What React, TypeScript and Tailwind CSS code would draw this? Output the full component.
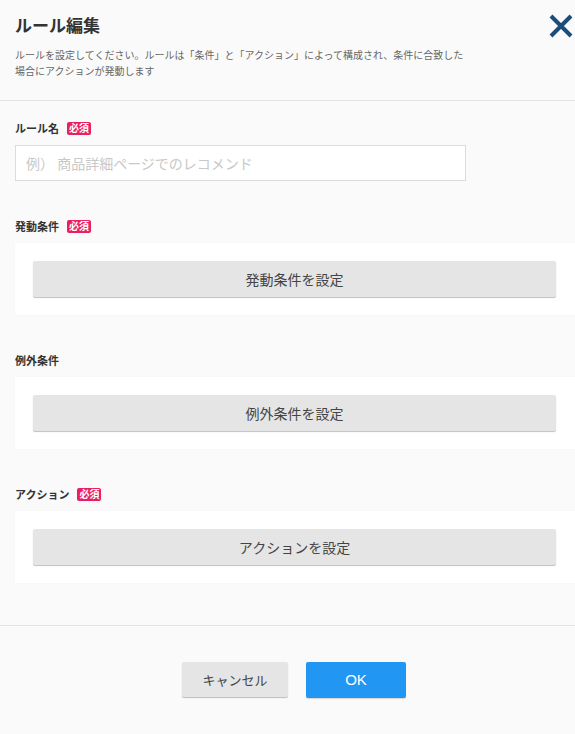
import React from "react";

const jp = { fontFamily: '"Noto Sans CJK JP", "Noto Sans", sans-serif' };

function Badge() {
  return (
    <span className="ml-[8px] inline-flex h-[13px] items-center rounded-[2px] bg-[#e91e63] px-[2px] text-[10px] font-bold leading-none text-white">
      必須
    </span>
  );
}

function Label({ text, required }: { text: string; required?: boolean }) {
  return (
    <div className="flex h-[16px] items-center text-[11px] font-bold leading-[16px] text-[#333]">
      <span>{text}</span>
      {required && <Badge />}
    </div>
  );
}

function Section({ label, required, button, mt }: { label: string; required?: boolean; button: string; mt: string }) {
  return (
    <div className={mt}>
      <div className="pl-[15px]">
        <Label text={label} required={required} />
      </div>
      <div className="ml-[15px] mt-[9px] bg-white py-[18px] pl-[18px] pr-[19px] shadow-[0_0_1px_rgba(0,0,0,0.06)]">
        <div className="flex h-[36px] items-center justify-center rounded-[2px] bg-[#e5e5e5] text-[14px] text-[#444] shadow-[0_1px_1px_rgba(0,0,0,0.25)]">
          {button}
        </div>
      </div>
    </div>
  );
}

export default function App() {
  return (
    <div className="h-[734px] w-[575px] overflow-hidden bg-[#fafafa]" style={jp}>
      <div className="border-b border-[#e3e3e3] pb-[21px] pl-[15px]">
        <div className="flex items-start justify-between">
          <h1 className="mt-[12px] text-[17px] font-bold leading-[26px] text-[#333]">ルール編集</h1>
          <svg width="26" height="26" viewBox="0 0 26 26" className="mr-[1px] mt-[13px]">
            <path d="M3 3 L23 23 M23 3 L3 23" stroke="#1b4c7c" strokeWidth="4" fill="none" />
          </svg>
        </div>
        <p className="mt-[8px] text-[10px] leading-[16px] text-[#666]">
          ルールを設定してください。ルールは「条件」と「アクション」によって構成され、条件に合致した
          <br />
          場合にアクションが発動します
        </p>
      </div>

      <div className="pt-[19px]">
        <div className="pl-[15px]">
          <Label text="ルール名" required />
          <input
            className="mt-[9px] h-[36px] w-[451px] border border-[#dcdcdc] bg-white px-[10px] text-[14px] text-[#333] outline-none placeholder:text-[#c8c8c8]"
            placeholder="例） 商品詳細ページでのレコメンド"
            style={jp}
          />
        </div>
        <Section mt="mt-[37px]" label="発動条件" required button="発動条件を設定" />
        <Section mt="mt-[37px]" label="例外条件" button="例外条件を設定" />
        <Section mt="mt-[37px]" label="アクション" required button="アクションを設定" />
      </div>

      <div className="mt-[42px] border-t border-[#e3e3e3] pt-[36px]">
        <div className="flex justify-center gap-[18px] pl-[13px]">
          <button className="h-[35px] w-[106px] rounded-[2px] bg-[#e5e5e5] text-[13px] text-[#444] shadow-[0_1px_1px_rgba(0,0,0,0.25)]" style={jp}>
            キャンセル
          </button>
          <button
            className="h-[36px] w-[100px] rounded-[2px] bg-[#2196f3] text-[15px] text-white shadow-[0_1px_1px_rgba(0,0,0,0.15)]"
            style={{ fontFamily: '"Liberation Sans", Arial, sans-serif' }}
          >
            OK
          </button>
        </div>
      </div>
    </div>
  );
}
